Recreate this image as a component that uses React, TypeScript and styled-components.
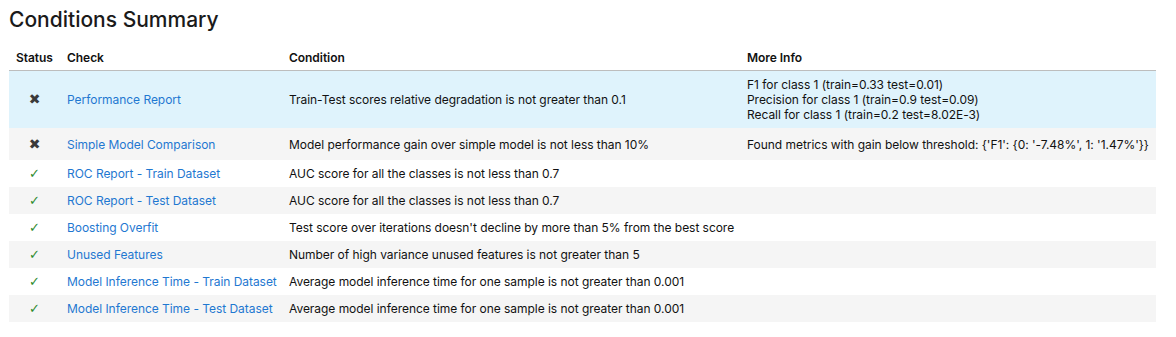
import React from 'react';
import styled, {createGlobalStyle} from "styled-components";

const GlobalStyle = createGlobalStyle`
  body {
    margin: 0;
    background: #fff;
    font-family: Inter, "Liberation Sans", Arial, sans-serif;
    color: #111;
  }
`;

type Row = {
    passed: boolean;
    check: string;
    condition: string;
    info?: string[];
};

const rows: Row[] = [
    {
        passed: false,
        check: "Performance Report",
        condition: "Train-Test scores relative degradation is not greater than 0.1",
        info: [
            "F1 for class 1 (train=0.33 test=0.01)",
            "Precision for class 1 (train=0.9 test=0.09)",
            "Recall for class 1 (train=0.2 test=8.02E-3)",
        ],
    },
    {
        passed: false,
        check: "Simple Model Comparison",
        condition: "Model performance gain over simple model is not less than 10%",
        info: ["Found metrics with gain below threshold: {'F1': {0: '-7.48%', 1: '1.47%'}}"],
    },
    {passed: true, check: "ROC Report - Train Dataset", condition: "AUC score for all the classes is not less than 0.7"},
    {passed: true, check: "ROC Report - Test Dataset", condition: "AUC score for all the classes is not less than 0.7"},
    {passed: true, check: "Boosting Overfit", condition: "Test score over iterations doesn't decline by more than 5% from the best score"},
    {passed: true, check: "Unused Features", condition: "Number of high variance unused features is not greater than 5"},
    {passed: true, check: "Model Inference Time - Train Dataset", condition: "Average model inference time for one sample is not greater than 0.001"},
    {passed: true, check: "Model Inference Time - Test Dataset", condition: "Average model inference time for one sample is not greater than 0.001"},
];

export default function App() {
    return (
        <StyledSummary>
            <GlobalStyle/>
            <Title>Conditions Summary</Title>
            <Table>
                <colgroup>
                    <col style={{width: 51}}/>
                    <col style={{width: 222}}/>
                    <col style={{width: 458}}/>
                    <col/>
                </colgroup>
                <thead>
                <tr>
                    <HeadCell>Status</HeadCell>
                    <HeadCell>Check</HeadCell>
                    <HeadCell>Condition</HeadCell>
                    <HeadCell>More Info</HeadCell>
                </tr>
                </thead>
                <tbody>
                {rows.map((row, i) => (
                    <BodyRow key={row.check} $striped={i % 2 === 1} $hover={i === 0} $tall={i === 1}>
                        <StatusCell $passed={row.passed}>{row.passed ? "✓" : "✖"}</StatusCell>
                        <Cell><CheckLink href="#">{row.check}</CheckLink></Cell>
                        <Cell>{row.condition}</Cell>
                        <Cell>
                            {row.info?.map((line) => <div key={line}>{line}</div>)}
                        </Cell>
                    </BodyRow>
                ))}
                </tbody>
            </Table>
        </StyledSummary>
    );
}

const StyledSummary = styled.section`
  padding: 7px 0 0 9px;
`;

const Title = styled.h3`
  margin: 0 0 13px 0;
  font-size: 21px;
  font-weight: 500;
  line-height: 26px;
  color: #1a1a1a;
`;

const Table = styled.table`
  width: 1147px;
  border-collapse: collapse;
  table-layout: fixed;
  font-size: 12px;
  letter-spacing: -0.04px;
  line-height: 15px;
`;

const HeadCell = styled.th`
  text-align: left;
  font-weight: 600;
  padding: 4px 7px 5px 7px;
  border-bottom: 1px solid #bdbdbd;
  color: #111;
`;

const BodyRow = styled.tr<{ $striped: boolean; $hover: boolean; $tall: boolean }>`
  background: ${p => p.$hover ? "#dff3fc" : p.$striped ? "#f5f5f5" : "#fff"};
  height: ${p => p.$tall ? "32px" : "auto"};
`;

const Cell = styled.td`
  padding: 6px 7px;
  vertical-align: middle;
  color: #111;
  white-space: nowrap;
`;

const StatusCell = styled(Cell)<{ $passed: boolean }>`
  text-align: center;
  color: ${p => p.$passed ? "#2e8b2e" : "#3a3a3a"};
  font-family: "DejaVu Sans", sans-serif;
  font-size: ${p => p.$passed ? "13px" : "14px"};
`;

const CheckLink = styled.a`
  color: #1f78d1;
  text-decoration: none;
`;
